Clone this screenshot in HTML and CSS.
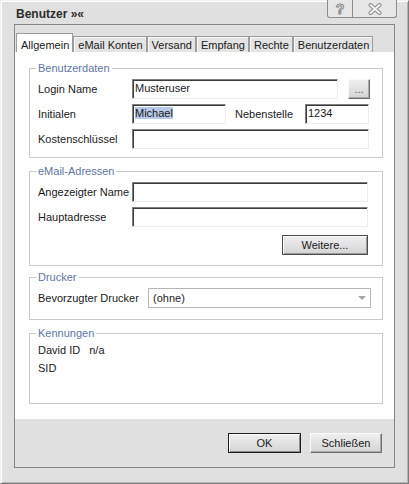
FILE: index.html
```html
<!DOCTYPE html>
<html lang="de">
<head>
    <meta charset="UTF-8">
    <meta name="viewport" content="width=device-width, initial-scale=1.0">
    <title>Benutzer</title>
    <link rel="stylesheet" href="styles.css">
</head>
<body>
    <div class="window">
        <div class="titlebar">
            <span class="title">Benutzer »«</span>
        </div>
        <div class="caption-buttons">
            <span class="cap help">?</span>
            <span class="cap close">
                <svg width="14" height="12" viewBox="0 0 14 12">
                    <path d="M2.5 2 L11.5 10 M11.5 2 L2.5 10" stroke="#8a8a8a" stroke-width="4" stroke-linecap="round"/>
                    <path d="M2.5 2 L11.5 10 M11.5 2 L2.5 10" stroke="#f2f2f2" stroke-width="2" stroke-linecap="round"/>
                </svg>
            </span>
        </div>

        <div class="panel">
            <div class="tabs">
                <div class="tab active">Allgemein</div>
                <div class="tab">eMail Konten</div>
                <div class="tab">Versand</div>
                <div class="tab">Empfang</div>
                <div class="tab">Rechte</div>
                <div class="tab">Benutzerdaten</div>
            </div>

            <div class="tab-body">
                <fieldset class="group g-user">
                    <legend>Benutzerdaten</legend>
                    <div class="row">
                        <span class="label">Login Name</span>
                        <div class="field w-login">Musteruser</div>
                        <button class="btn small">...</button>
                    </div>
                    <div class="row">
                        <span class="label">Initialen</span>
                        <div class="field w-init"><span class="sel">Michael</span></div>
                        <span class="label-inline">Nebenstelle</span>
                        <div class="field w-ext">1234</div>
                    </div>
                    <div class="row">
                        <span class="label">Kostenschlüssel</span>
                        <div class="field w-cost"></div>
                    </div>
                </fieldset>

                <fieldset class="group g-mail">
                    <legend>eMail-Adressen</legend>
                    <div class="row">
                        <span class="label">Angezeigter Name</span>
                        <div class="field w-mail"></div>
                    </div>
                    <div class="row">
                        <span class="label">Hauptadresse</span>
                        <div class="field w-mail"></div>
                    </div>
                    <div class="row actions">
                        <button class="btn outlined more">Weitere...</button>
                    </div>
                </fieldset>

                <fieldset class="group g-print">
                    <legend>Drucker</legend>
                    <div class="row">
                        <span class="label wide">Bevorzugter Drucker</span>
                        <div class="select">
                            <span>(ohne)</span>
                            <span class="arrow"></span>
                        </div>
                    </div>
                </fieldset>

                <fieldset class="group g-ids">
                    <legend>Kennungen</legend>
                    <div class="id-line">David ID <span class="id-value">n/a</span></div>
                    <div class="id-line">SID</div>
                </fieldset>
            </div>

            <div class="footer">
                <button class="btn default wide-btn">OK</button>
                <button class="btn wide-btn">Schließen</button>
            </div>
        </div>
    </div>
</body>
</html>
```

FILE: styles.css
```css
body {
    margin: 0;
    font-family: "Liberation Sans", Arial, sans-serif;
    font-size: 11px;
    color: #1a1a1a;
    background-color: #e0e0e0;
}
.window {
    position: relative;
    width: 409px;
    height: 484px;
    box-sizing: border-box;
    padding: 0 13px 15px 13px;
    background-color: #e0e0e0;
    border: 1px solid;
    border-color: #f0f0f0 #7c7c7c #7c7c7c #f0f0f0;
    box-shadow: inset 1px 1px #ffffff, inset -1px -1px #b4b4b4;
}
.titlebar {
    height: 20px;
    padding: 3px 0 0 2px;
    display: flex;
    align-items: center;
}
.title {
    font-size: 12px;
    font-weight: bold;
    color: #2e2e2e;
}

/* window caption buttons sit over the frame */
.caption-buttons {
    position: absolute;
    top: -1px;
    right: 11px;
    display: flex;
    height: 17px;
    border: 1px solid #8c8c8c;
    border-top: none;
    border-radius: 0 0 3px 3px;
    background-color: #e6e6e6;
}
.cap {
    display: flex;
    justify-content: center;
    align-items: center;
}
.cap.help {
    width: 24px;
    font-size: 14px;
    font-weight: bold;
    color: #f2f2f2;
    -webkit-text-stroke: 1px #8a8a8a;
}
.cap.close {
    width: 43px;
    border-left: 1px solid #8c8c8c;
}

.panel {
    height: 444px;
    box-sizing: border-box;
    border: 1px solid #868686;
    display: flex;
    flex-direction: column;
}
.tabs {
    height: 27px;
    flex: none;
    display: flex;
    align-items: flex-end;
    padding-left: 1px;
}
.tab {
    height: 16px;
    box-sizing: border-box;
    padding: 0 3px 0 4px;
    border: 1px solid #9c9c9c;
    border-bottom: none;
    display: flex;
    align-items: center;
    background-color: #e4e4e4;
    box-shadow: inset 1px 1px #f8f8f8;
    white-space: nowrap;
}
.tab.active {
    height: 20px;
    margin-bottom: -1px;
    padding-top: 2px;
    background-color: #fff;
    box-shadow: none;
}
.tab-body {
    height: 367px;
    flex: none;
    box-sizing: border-box;
    padding: 10px 11px 0 14px;
    background-color: #fff;
}
.footer {
    flex: 1;
    display: flex;
    justify-content: flex-end;
    align-items: flex-start;
    gap: 9px;
    padding: 14px 12px 0 0;
}

.group {
    margin: 0;
    min-width: 0;
    border: 1px solid #cacaca;
    padding: 4px 11px 8px 8px;
}
.group legend {
    padding: 0 2px;
    margin-left: -2px;
    line-height: 13px;
    color: #6275a3; /* blue-grey caption */
}
.g-mail {
    margin-top: 7px;
    padding-bottom: 10px;
}
.g-print {
    margin-top: 5px;
    padding-bottom: 11px;
}
.g-ids {
    margin-top: 7px;
    padding-top: 1px;
    padding-bottom: 26px;
}

.row {
    height: 20px;
    display: flex;
    align-items: center;
}
.row + .row {
    margin-top: 5px;
}
.row.actions {
    margin-top: 8px;
    justify-content: flex-end;
}
.label {
    width: 94px;
    flex: none;
    white-space: nowrap;
}
.label.wide {
    width: 110px;
}
.label-inline {
    width: 70px;
    margin-left: 9px;
    flex: none;
}

.field {
    height: 20px;
    box-sizing: border-box;
    padding-left: 2px;
    line-height: 17px;
    background-color: #fff;
    border: 1px solid;
    border-color: #7e7e7e #ececec #ececec #7e7e7e;
    box-shadow: inset 1px 1px #3c3c3c;
    white-space: nowrap;
}
.w-login { width: 206px; }
.w-init { width: 94px; }
.w-ext { width: 64px; }
.w-cost { width: 237px; }
.w-mail { width: 236px; }
.sel {
    background-color: #b7c8e8;
}

.select {
    width: 223px;
    height: 20px;
    box-sizing: border-box;
    padding-left: 4px;
    display: flex;
    align-items: center;
    border: 1px solid #b6b6b6;
    background-color: #fff;
}
.arrow {
    margin-left: auto;
    margin-right: 4px;
    border-left: 4px solid transparent;
    border-right: 4px solid transparent;
    border-top: 4px solid #a6a6a6;
}

.id-line {
    line-height: 18px;
}
.id-value {
    margin-left: 6px;
}

.btn {
    height: 20px;
    box-sizing: border-box;
    padding: 0;
    font-family: "Liberation Sans", Arial, sans-serif;
    font-size: 11px;
    color: #1a1a1a;
    background: linear-gradient(#efefef, #d4d4d4);
    border: 1px solid;
    border-color: #fafafa #6e6e6e #6e6e6e #fafafa;
    box-shadow: inset -1px -1px #a8a8a8;
}
.btn.small {
    width: 22px;
    margin-left: 10px;
    color: #555;
}
.btn.outlined {
    border-color: #4c4c4c;
    box-shadow: inset 1px 1px #fff, inset -1px -1px #9a9a9a;
}
.btn.more {
    width: 86px;
    margin-right: 3px;
}
.btn.default {
    border-color: #1e1e1e;
    box-shadow: inset 1px 1px #fff, inset -1px -1px #8a8a8a;
}
.wide-btn {
    width: 73px;
}
.wide-btn + .wide-btn {
    width: 72px;
}
```
